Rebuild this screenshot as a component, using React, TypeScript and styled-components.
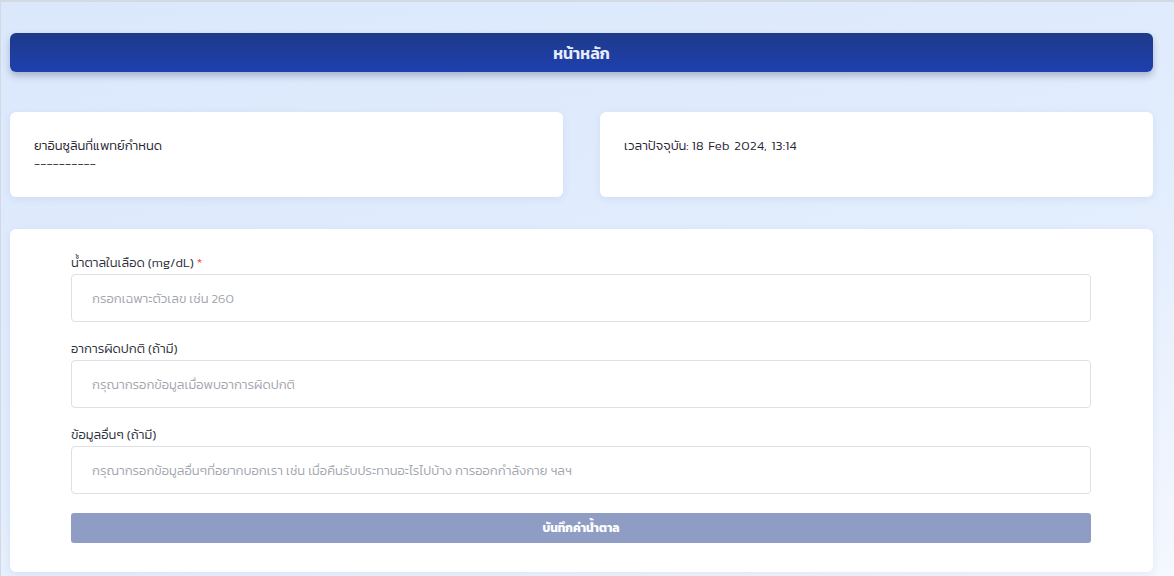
import React from "react";
import styled, { createGlobalStyle } from "styled-components";

const GlobalStyle = createGlobalStyle`
  html, body {
    margin: 0;
    padding: 0;
  }
  body {
    font-family: "Kanit", "Prompt", "Noto Sans Thai", sans-serif;
    font-weight: 300;
    color: #1f2937;
  }
  * { box-sizing: border-box; }
`;

const Page = styled.div`
  min-height: 576px;
  border-top: 2px solid #d3d9e3;
  border-left: 1px solid #d3d9e3;
  padding: 31px 21px 5px 9px;
  background: linear-gradient(165deg, #dbe8fc 0%, #e2edfd 55%, #f4f8ff 100%);
  display: flex;
  flex-direction: column;
`;

const HeaderBar = styled.header`
  height: 39px;
  border-radius: 6px;
  background: linear-gradient(to bottom, #1e3a8a, #1e40af);
  box-shadow: 0 4px 7px rgba(30, 41, 80, 0.28);
  display: flex;
  align-items: center;
  justify-content: center;
  color: #e6ecfb;
  font-weight: 600;
  font-size: 16px;
`;

const InfoGrid = styled.section`
  margin-top: 40px;
  display: grid;
  grid-template-columns: 1fr 1fr;
  column-gap: 37px;
`;

const Card = styled.div`
  background: #fff;
  border-radius: 6px;
  box-shadow: 0 2px 8px rgba(40, 60, 110, 0.08);
`;

const InfoCard = styled(Card)`
  height: 85px;
  padding: 25px 23px 25px 24px;
  font-size: 13px;
  line-height: 18px;
  color: #1f2430;
`;

const DateText = styled.span`
  letter-spacing: 0.35px;
  word-spacing: 1px;
`;

const FormCard = styled(Card)`
  margin-top: 32px;
  padding: 24px 62px 29px 61px;
  display: flex;
  flex-direction: column;
`;

const Field = styled.div`
  display: flex;
  flex-direction: column;
  & + & {
    margin-top: 17px;
  }
`;

const Label = styled.label`
  font-size: 13px;
  line-height: 20px;
  color: #2b2f3a;
  margin-bottom: 1px;
`;

const Required = styled.span`
  color: #ef4444;
  margin-left: 3px;
`;

const Input = styled.input`
  height: 48px;
  border: 1px solid #dfe0e6;
  border-radius: 4px;
  padding: 0 20px;
  font-family: inherit;
  font-weight: 300;
  font-size: 13px;
  color: #1f2937;
  outline: none;
  &::placeholder {
    color: #a3a5ae;
  }
`;

const SubmitButton = styled.button`
  margin-top: 19px;
  height: 30px;
  border: none;
  border-radius: 3px;
  background: #8f9dc5;
  color: #fff;
  font-family: inherit;
  font-weight: 700;
  font-size: 12px;
  cursor: not-allowed;
`;

export default function App() {
  return (
    <>
      <GlobalStyle />
      <Page>
        <HeaderBar>หน้าหลัก</HeaderBar>
        <InfoGrid>
          <InfoCard>
            <div>ยาอินซูลินที่แพทย์กำหนด</div>
            <div>----------</div>
          </InfoCard>
          <InfoCard>
            <div>
              เวลาปัจจุบัน: <DateText>18 Feb 2024, 13:14</DateText>
            </div>
          </InfoCard>
        </InfoGrid>
        <FormCard as="form">
          <Field>
            <Label>
              น้ำตาลในเลือด (mg/dL)<Required>*</Required>
            </Label>
            <Input placeholder="กรอกเฉพาะตัวเลข เช่น 260" />
          </Field>
          <Field>
            <Label>อาการผิดปกติ (ถ้ามี)</Label>
            <Input placeholder="กรุณากรอกข้อมูลเมื่อพบอาการผิดปกติ" />
          </Field>
          <Field>
            <Label>ข้อมูลอื่นๆ (ถ้ามี)</Label>
            <Input placeholder="กรุณากรอกข้อมูลอื่นๆที่อยากบอกเรา เช่น เมื่อคืนรับประทานอะไรไปบ้าง การออกกำลังกาย ฯลฯ" />
          </Field>
          <SubmitButton type="button" disabled>
            บันทึกค่าน้ำตาล
          </SubmitButton>
        </FormCard>
      </Page>
    </>
  );
}
